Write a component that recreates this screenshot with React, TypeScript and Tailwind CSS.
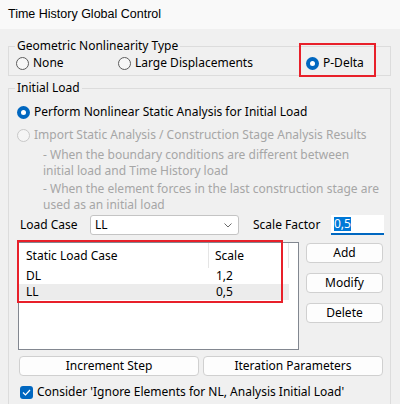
import React from "react";

const font = { fontFamily: '"Noto Sans", "Noto Sans CJK KR", sans-serif' };

const Radio: React.FC<{ checked?: boolean; disabled?: boolean; label: string }> = ({
  checked,
  disabled,
  label,
}) => (
  <div className="flex items-center h-4">
    {checked ? (
      <span className="w-[13px] h-[13px] rounded-full bg-[#0067c0] flex items-center justify-center shrink-0">
        <span className="w-[5px] h-[5px] rounded-full bg-white" />
      </span>
    ) : (
      <span
        className={
          "w-[13px] h-[13px] rounded-full border shrink-0 " +
          (disabled ? "border-[#c8c8c8] bg-[#f5f5f5]" : "border-[#5c5c5c] bg-[#f7f7f7]")
        }
      />
    )}
    <span className={"ml-[4px] whitespace-nowrap " + (disabled ? "text-[#a6a6a6]" : "text-black")}>
      {label}
    </span>
  </div>
);

const Btn: React.FC<{ label: string; className?: string }> = ({ label, className }) => (
  <button
    className={
      "h-[20px] bg-[#fdfdfd] border border-[#d0d0d0] rounded-[4px] text-[12px] text-black leading-none " +
      (className ?? "")
    }
  >
    {label}
  </button>
);

export default function App() {
  return (
    <div className="w-[400px] h-[404px] overflow-hidden bg-[#f0f0f0] text-[12px] text-black" style={font}>
      <div className="h-[29px] bg-[#f9f9f9] pl-2 flex items-center font-['Liberation_Sans',sans-serif] text-[12.5px]">
        Time History Global Control
      </div>

      <div className="pl-2 pr-[9px]">
        {/* Geometric Nonlinearity Type */}
        <div className="relative">
          <fieldset className="mt-[9px] border border-[#dcdcdc] pb-[4px]">
            <legend className="ml-[6px] px-[2px] leading-4">Geometric Nonlinearity Type</legend>
            <div className="flex pl-[7px] pt-[1px]">
              <div className="w-[102px]">
                <Radio label="None" />
              </div>
              <div className="w-[188px]">
                <Radio label="Large Displacements" />
              </div>
              <Radio checked label="P-Delta" />
            </div>
          </fieldset>
          <div className="absolute left-[291px] top-[5px] w-[77px] h-[34px] border-2 border-[#e8202a]" />
        </div>

        {/* Initial Load */}
        <fieldset className="mt-[4px] border border-[#dcdcdc] pb-[60px]">
          <legend className="ml-[6px] px-[2px] leading-4">Initial Load</legend>
          <div className="pl-[8px] pt-[8px]">
            <Radio checked label="Perform Nonlinear Static Analysis for Initial Load" />
            <div className="mt-[7px]">
              <Radio disabled label="Import Static Analysis / Construction Stage Analysis Results" />
            </div>
            <div className="pl-[26px] text-[#a6a6a6] leading-4">
              <p className="mt-[4px]">
                - When the boundary conditions are different between
                <br />
                initial load and Time History load
              </p>
              <p className="mt-[2px]">
                - When the element forces in the last construction stage are
                <br />
                used as an initial load
              </p>
            </div>
          </div>

          <div className="flex items-center h-[20px] mt-[2px] pl-[11px]">
            <span className="w-[70px]">Load Case</span>
            <div className="w-[149px] h-[20px] bg-white border border-[#c4c4c4] rounded-[3px] flex items-center pl-[4px] pr-[6px] justify-between">
              <span>LL</span>
              <svg width="8" height="5" viewBox="0 0 8 5">
                <path d="M0.5 0.5 L4 4 L7.5 0.5" fill="none" stroke="#6a6a6a" strokeWidth="1" />
              </svg>
            </div>
            <span className="ml-[14px] w-[78px]">Scale Factor</span>
            <div className="w-[53px] h-[20px] bg-white border-b-2 border-[#0067c0] flex items-center pl-[3px]">
              <span className="bg-[#0078d7] text-white leading-[14px]">0,5</span>
            </div>
          </div>

          <div className="flex mt-[7px] pl-[9px]">
            <div className="relative">
              <div className="w-[281px] h-[108px] bg-white border border-[#828790]">
                <div className="flex h-[25px] items-center">
                  <div className="w-[190px] h-full pl-[7px] flex items-center border-r border-[#e5e5e5]">
                    Static Load Case
                  </div>
                  <div className="w-[80px] h-full pl-[6px] flex items-center border-r border-[#e5e5e5]">
                    Scale
                  </div>
                </div>
                <div className="flex h-[16px] items-center w-[270px]">
                  <span className="w-[190px] pl-[7px]">DL</span>
                  <span className="pl-[7px]">1,2</span>
                </div>
                <div className="flex h-[16px] items-center w-[270px] bg-[#ececec]">
                  <span className="w-[190px] pl-[7px]">LL</span>
                  <span className="pl-[7px]">0,5</span>
                </div>
              </div>
              <div className="absolute left-[-1px] top-[-2px] w-[266px] h-[63px] border-2 border-[#e8202a]" />
            </div>
            <div className="flex flex-col ml-[7px] mt-[1px] gap-[10px]">
              <Btn label="Add" className="w-[77px]" />
              <Btn label="Modify" className="w-[77px]" />
              <Btn label="Delete" className="w-[77px]" />
            </div>
          </div>

          <div className="flex gap-[4px] mt-[6px] pl-[10px]">
            <Btn label="Increment Step" className="w-[180px] h-[19px]" />
            <Btn label="Iteration Parameters" className="w-[180px] h-[19px]" />
          </div>

          <div className="flex items-center mt-[7px] pl-[11px]">
            <span className="w-[13px] h-[13px] rounded-[3px] bg-[#0067c0] flex items-center justify-center">
              <svg width="9" height="7" viewBox="0 0 9 7">
                <path d="M1 3.5 L3.5 6 L8 1" fill="none" stroke="white" strokeWidth="1.2" />
              </svg>
            </span>
            <span className="ml-[4px]">Consider 'Ignore Elements for NL, Analysis Initial Load'</span>
          </div>
        </fieldset>
      </div>
    </div>
  );
}
